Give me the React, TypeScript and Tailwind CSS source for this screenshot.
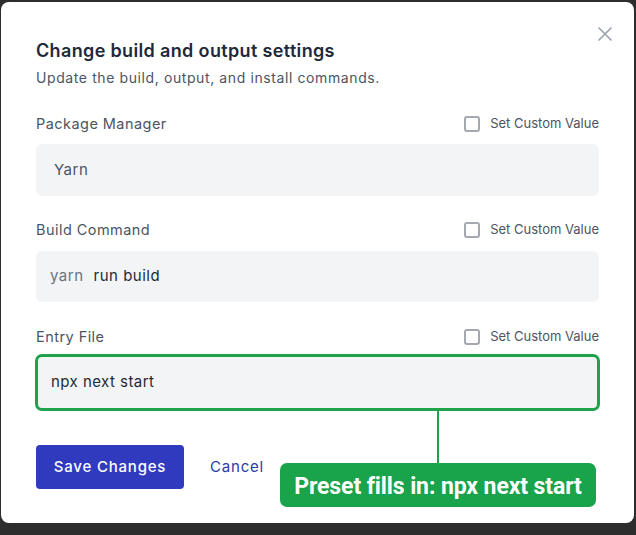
import React from "react";

function Checkbox() {
  return <span className="inline-block w-[16px] h-[16px] rounded-[3px] border-2 border-[#a3a8b1] bg-white" />;
}

function LabelRow({ label }: { label: string }) {
  return (
    <div className="flex items-center justify-between h-[20px]">
      <span className="text-[14.5px] tracking-[0.45px] text-[#4b5563]">{label}</span>
      <label className="flex items-center gap-[10px]">
        <Checkbox />
        <span className="text-[13px] text-[#4b5563]">Set Custom Value</span>
      </label>
    </div>
  );
}

export default function App() {
  return (
    <div
      className="w-[636px] h-[535px] bg-[#2d2d2d] pt-[2px] pl-[1px] overflow-hidden"
      style={{ fontFamily: "Inter, 'Noto Sans', sans-serif" }}
    >
      <div className="relative w-[633px] h-[521px] bg-white rounded-[8px] px-[35px] pt-[37px]">
        <button className="absolute left-[596px] top-[24px] w-[16px] h-[16px] flex items-center justify-center">
          <svg width="16" height="16" viewBox="0 0 16 16" fill="none">
            <path d="M2 2L14 14M14 2L2 14" stroke="#9ca3af" strokeWidth="1.7" strokeLinecap="round" />
          </svg>
        </button>
        <h2 className="text-[18px] leading-[24px] font-semibold tracking-[0.35px] text-[#1e293b]">Change build and output settings</h2>
        <p className="mt-[5px] text-[14px] leading-[20px] tracking-[0.6px] text-[#4b5563]">Update the build, output, and install commands.</p>

        <div className="mt-[26px]">
          <LabelRow label="Package Manager" />
          <div className="mt-[10px] h-[52px] rounded-[6px] bg-[#f3f4f6] flex items-center pl-[18px] text-[15px] tracking-[0.5px] text-[#4b5563]">
            Yarn
          </div>
        </div>

        <div className="mt-[24px]">
          <LabelRow label="Build Command" />
          <div className="mt-[11px] h-[51px] rounded-[6px] bg-[#f3f4f6] flex items-center pl-[14px] text-[15px] tracking-[0.5px]">
            <span className="text-[#6b7280]">yarn</span>
            <span className="ml-[10px] text-[#1f2937]">run build</span>
          </div>
        </div>

        <div className="mt-[25px]">
          <LabelRow label="Entry File" />
          <div className="mt-[7px] -mx-[1px] h-[57px] rounded-[7px] border-[3px] border-[#1ea34c] bg-[#f3f4f6] flex items-center pl-[13px] text-[15px] tracking-[0.45px] text-[#1f2937]">
            npx next start
          </div>
        </div>

        <div className="mt-[34px] flex items-center">
          <button className="w-[148px] h-[44px] rounded-[4px] bg-[#2f3abf] text-white text-[15px] font-medium tracking-[0.8px]">
            Save Changes
          </button>
          <button className="ml-[26px] text-[15px] tracking-[0.8px] text-[#2e3aa6]">Cancel</button>
        </div>

        <div className="absolute left-[436px] top-[409px] w-[2px] h-[52px] bg-[#1ea34c]" />
        <div
          className="absolute left-[279px] top-[461px] w-[316px] h-[44px] rounded-[7px] bg-[#19a34a] flex items-center justify-center pt-[5px] text-white text-[23px] font-bold tracking-[-0.1px]"
          style={{ fontFamily: "Roboto, 'Liberation Sans', sans-serif" }}
        >
          Preset fills in: npx next start
        </div>
      </div>
    </div>
  );
}
